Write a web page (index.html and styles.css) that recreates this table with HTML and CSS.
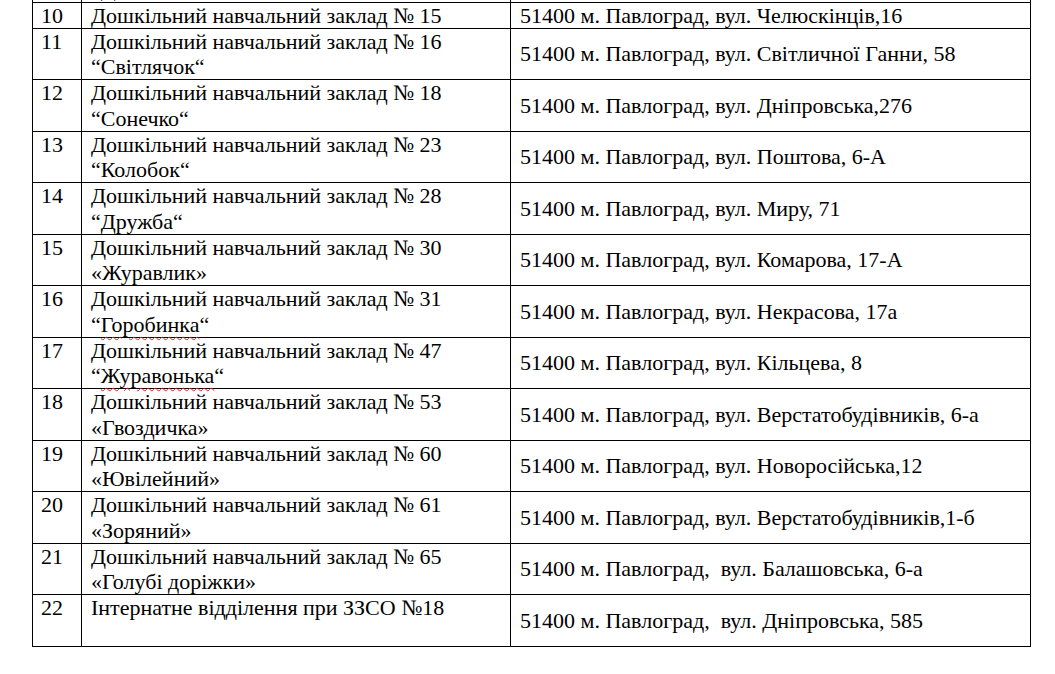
FILE: index.html
```html
<!DOCTYPE html>
<html>
<head>
<meta charset="utf-8">
<title>Перелік закладів</title>
<link rel="stylesheet" href="styles.css">
</head>
<body>
<div class="page">
<table class="list">
  <colgroup>
    <col class="c-num">
    <col class="c-name">
    <col class="c-addr">
  </colgroup>
  <tbody>
    <tr class="cut">
      <td class="num">9</td>
      <td class="name">Дошкільний навчальний заклад № 14<br>“Дзвіночок“</td>
      <td class="addr">51400 м. Павлоград, вул. Шевченка, 10</td>
    </tr>
    <tr>
      <td class="num">10</td>
      <td class="name">Дошкільний навчальний заклад № 15</td>
      <td class="addr">51400 м. Павлоград, вул. Челюскінців,16</td>
    </tr>
    <tr>
      <td class="num">11</td>
      <td class="name">Дошкільний навчальний заклад № 16<br>“Світлячок“</td>
      <td class="addr">51400 м. Павлоград, вул. Світличної Ганни, 58</td>
    </tr>
    <tr>
      <td class="num">12</td>
      <td class="name">Дошкільний навчальний заклад № 18<br>“Сонечко“</td>
      <td class="addr">51400 м. Павлоград, вул. Дніпровська,276</td>
    </tr>
    <tr>
      <td class="num">13</td>
      <td class="name">Дошкільний навчальний заклад № 23<br>“Колобок“</td>
      <td class="addr">51400 м. Павлоград, вул. Поштова, 6-А</td>
    </tr>
    <tr>
      <td class="num">14</td>
      <td class="name">Дошкільний навчальний заклад № 28<br>“Дружба“</td>
      <td class="addr">51400 м. Павлоград, вул. Миру, 71</td>
    </tr>
    <tr>
      <td class="num">15</td>
      <td class="name">Дошкільний навчальний заклад № 30<br>«Журавлик»</td>
      <td class="addr">51400 м. Павлоград, вул. Комарова, 17-А</td>
    </tr>
    <tr>
      <td class="num">16</td>
      <td class="name">Дошкільний навчальний заклад № 31<br>“<span class="spell">Горобинка</span>“</td>
      <td class="addr">51400 м. Павлоград, вул. Некрасова, 17а</td>
    </tr>
    <tr>
      <td class="num">17</td>
      <td class="name">Дошкільний навчальний заклад № 47<br>“<span class="spell">Журавонька</span>“</td>
      <td class="addr">51400 м. Павлоград, вул. Кільцева, 8</td>
    </tr>
    <tr>
      <td class="num">18</td>
      <td class="name">Дошкільний навчальний заклад № 53<br>«Гвоздичка»</td>
      <td class="addr">51400 м. Павлоград, вул. Верстатобудівників, 6-а</td>
    </tr>
    <tr>
      <td class="num">19</td>
      <td class="name">Дошкільний навчальний заклад № 60<br>«Ювілейний»</td>
      <td class="addr">51400 м. Павлоград, вул. Новоросійська,12</td>
    </tr>
    <tr>
      <td class="num">20</td>
      <td class="name">Дошкільний навчальний заклад № 61<br>«Зоряний»</td>
      <td class="addr">51400 м. Павлоград, вул. Верстатобудівників,1-б</td>
    </tr>
    <tr>
      <td class="num">21</td>
      <td class="name">Дошкільний навчальний заклад № 65<br>«Голубі доріжки»</td>
      <td class="addr">51400 м. Павлоград,&nbsp; вул. Балашовська, 6-а</td>
    </tr>
    <tr>
      <td class="num">22</td>
      <td class="name">Інтернатне відділення при ЗЗСО №18<br>&nbsp;</td>
      <td class="addr">51400 м. Павлоград,&nbsp; вул. Дніпровська, 585</td>
    </tr>
  </tbody>
</table>
</div>
</body>
</html>
```

FILE: styles.css
```css
html, body {
  margin: 0;
  padding: 0;
  background: #ffffff;
  font-family: "Liberation Serif", serif;
}

.page {
  overflow: hidden;
  height: 674px;
  padding-left: 32px;
}

.list {
  border-collapse: collapse;
  table-layout: fixed;
  width: 998px;
  margin-top: -50px;
  font-family: "Liberation Serif", serif;
  font-size: 22px;
  line-height: 25.25px;
  color: #000000;
}

.list td {
  font-family: "Liberation Serif", serif;
  border: 1px solid #000000;
  padding: 0;
}

.c-num { width: 49px; }
.c-name { width: 429px; }
.c-addr { width: 520px; }

.list td.num {
  vertical-align: top;
  padding-left: 8px;
}

.list td.name {
  vertical-align: top;
  padding-left: 9px;
}

.list td.addr {
  vertical-align: middle;
  padding-left: 9px;
}

.spell {
  text-decoration: underline wavy #d22;
  text-decoration-thickness: 1px;
  text-underline-offset: 4px;
}
```
